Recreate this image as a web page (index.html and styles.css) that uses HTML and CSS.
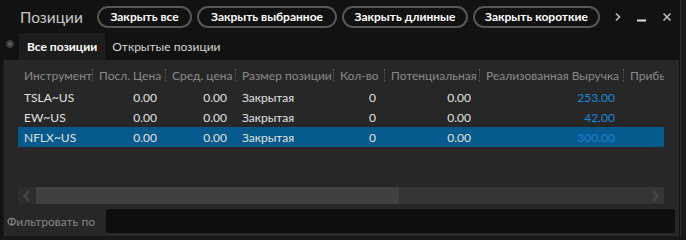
FILE: index.html
```html
<!DOCTYPE html>
<html lang="ru">
<head>
    <meta charset="UTF-8">
    <title>Позиции</title>
    <link rel="stylesheet" href="styles.css">
</head>
<body>

    <div class="window">
        <div class="titlebar">
            <span class="title">Позиции</span>
            <div class="actions">
                <button class="pill b1">Закрыть все</button>
                <button class="pill b2">Закрыть выбранное</button>
                <button class="pill b3">Закрыть длинные</button>
                <button class="pill b4">Закрыть короткие</button>
            </div>
            <div class="controls">
                <svg width="8" height="10" viewBox="0 0 8 10"><path d="M2 1.5 L5.5 5 L2 8.5" fill="none" stroke="#bdbdbd" stroke-width="1.6"/></svg>
                <svg width="10" height="10" viewBox="0 0 10 10"><path d="M0 8.5 H9" stroke="#e0e0e0" stroke-width="2"/></svg>
                <svg width="10" height="10" viewBox="0 0 10 10"><path d="M1.5 1.5 L8.5 8.5 M8.5 1.5 L1.5 8.5" stroke="#bdbdbd" stroke-width="1.6"/></svg>
            </div>
        </div>

        <div class="tabs">
            <span class="radio"></span>
            <div class="tab active">Все позиции</div>
            <div class="tab">Открытые позиции</div>
        </div>

        <div class="content">
            <div class="grid">
                <div class="row head">
                    <div class="cell">Инструмент<span class="sep"></span></div>
                    <div class="cell">Посл. Цена<span class="sep"></span></div>
                    <div class="cell">Сред. цена<span class="sep"></span></div>
                    <div class="cell">Размер позиции<span class="sep"></span></div>
                    <div class="cell">Кол-во<span class="sep"></span></div>
                    <div class="cell">Потенциальная<span class="sep"></span></div>
                    <div class="cell">Реализованная Выручка<span class="sep"></span></div>
                    <div class="cell">Прибыль</div>
                </div>
                <div class="row">
                    <div class="cell">TSLA~US</div>
                    <div class="cell num">0.00</div>
                    <div class="cell num">0.00</div>
                    <div class="cell">Закрытая</div>
                    <div class="cell num">0</div>
                    <div class="cell num">0.00</div>
                    <div class="cell num blue">253.00</div>
                    <div class="cell"></div>
                </div>
                <div class="row">
                    <div class="cell">EW~US</div>
                    <div class="cell num">0.00</div>
                    <div class="cell num">0.00</div>
                    <div class="cell">Закрытая</div>
                    <div class="cell num">0</div>
                    <div class="cell num">0.00</div>
                    <div class="cell num blue">42.00</div>
                    <div class="cell"></div>
                </div>
                <div class="row selected">
                    <div class="cell">NFLX~US</div>
                    <div class="cell num">0.00</div>
                    <div class="cell num">0.00</div>
                    <div class="cell">Закрытая</div>
                    <div class="cell num">0</div>
                    <div class="cell num">0.00</div>
                    <div class="cell num blue">300.00</div>
                    <div class="cell"></div>
                </div>
            </div>

            <div class="scrollbar">
                <div class="arrow left">
                    <svg width="8" height="12" viewBox="0 0 8 12"><path d="M6 1 L1.5 6 L6 11" fill="none" stroke="#454545" stroke-width="2.5"/></svg>
                </div>
                <div class="thumb"></div>
                <div class="track">
                    <svg width="8" height="12" viewBox="0 0 8 12"><path d="M2 1 L6.5 6 L2 11" fill="none" stroke="#474747" stroke-width="2.5"/></svg>
                </div>
            </div>

            <div class="filter">
                <label for="filter">Фильтровать по</label>
                <input type="text" id="filter">
            </div>
        </div>
    </div>

</body>
</html>
```

FILE: styles.css
```css
* {
    margin: 0;
    padding: 0;
    box-sizing: border-box;
}

body {
    font-family: 'Lato', 'Open Sans', sans-serif;
    font-size: 12px;
    background-color: #181818;
    color: #e2e2e2;
    width: 686px;
    height: 240px;
    overflow: hidden;
}

.window {
    width: 681px;
    height: 236px;
    background-color: #121212;
    border-right: 1px solid #2e2e2e;
    display: flex;
    flex-direction: column;
}

/* Title bar */
.titlebar {
    height: 33px;
    flex-shrink: 0;
    display: flex;
    align-items: center;
    padding-left: 20px;
}

.title {
    font-size: 15.5px;
    color: #c6c6c6;
    width: 77px;
}

.actions {
    display: flex;
    gap: 5px;
}

.pill {
    font-family: 'Lato', 'Open Sans', sans-serif;
    font-size: 12px;
    font-weight: bold;
    color: #fff;
    background-color: #111;
    border: 2px solid #575757;
    border-radius: 12px;
    height: 22px;
    padding: 0;
    white-space: nowrap;
}

.b1 { width: 95px; }
.b2 { width: 140px; }
.b3 { width: 126px; }
.b4 { width: 127px; }

.controls {
    display: flex;
    align-items: center;
    gap: 15px;
    margin-left: 14px;
}

/* Tabs */
.tabs {
    height: 27px;
    flex-shrink: 0;
    display: flex;
    align-items: stretch;
}

.radio {
    width: 8px;
    height: 8px;
    margin: 7px 5px 0 6px;
    border-radius: 50%;
    border: 1px solid #4a4a4a;
    background: radial-gradient(circle, #5a5a5a 45%, #2a2a2a 55%);
}

.tab {
    display: flex;
    align-items: center;
    padding: 0 7px;
    color: #d6d6d6;
    white-space: nowrap;
}

.tab.active {
    background-color: #1d1d1d;
    color: #fff;
    font-weight: bold;
    padding: 0 8px;
}

/* Content */
.content {
    flex: 1;
    margin-left: 3px;
    margin-right: 1px;
    background-color: #272727;
    border-left: 1px solid #1a1a1a;
    padding-left: 14px;
    display: flex;
    flex-direction: column;
}

.grid {
    width: 646px;
    height: 87px;
    flex-shrink: 0;
    overflow: hidden;
}

.row {
    display: grid;
    grid-template-columns: 75px 73px 70px 98px 51px 95px 144px 60px;
    height: 20px;
    align-items: center;
    white-space: nowrap;
}

.row.head {
    height: 27px;
    padding-top: 3px;
    color: #8a8a8a;
}

.cell {
    padding: 0 9px 0 6px;
    overflow: hidden;
}

.head .cell {
    display: flex;
    align-items: center;
    justify-content: space-between;
    padding: 0 0 0 6px;
}

.sep {
    width: 1px;
    height: 12px;
    flex-shrink: 0;
    border-left: 1px dotted #5a5a5a;
}

.num {
    text-align: right;
}

.blue {
    color: #1b88d6;
}

.selected {
    background-color: #045a8c;
}

.selected .blue {
    color: #1f80cc;
}

/* Scrollbar */
.scrollbar {
    width: 646px;
    height: 17px;
    flex-shrink: 0;
    margin-top: 40px;
    display: flex;
}

.arrow {
    width: 18px;
    background-color: #2d2d2d;
    display: flex;
    align-items: center;
    justify-content: center;
}

.thumb {
    width: 363px;
    background-color: #404040;
}

.track {
    flex: 1;
    background-color: #353535;
    display: flex;
    align-items: center;
    justify-content: flex-end;
    padding-right: 5px;
}

/* Filter */
.filter {
    display: flex;
    align-items: center;
    margin-top: 5px;
    margin-left: -11px;
    height: 24px;
    flex-shrink: 0;
}

.filter label {
    width: 99px;
    flex-shrink: 0;
    color: #878787;
    white-space: nowrap;
}

.filter input {
    width: 569px;
    height: 24px;
    background-color: #0e0e0e;
    border: none;
    border-radius: 3px;
    outline: none;
}
```
